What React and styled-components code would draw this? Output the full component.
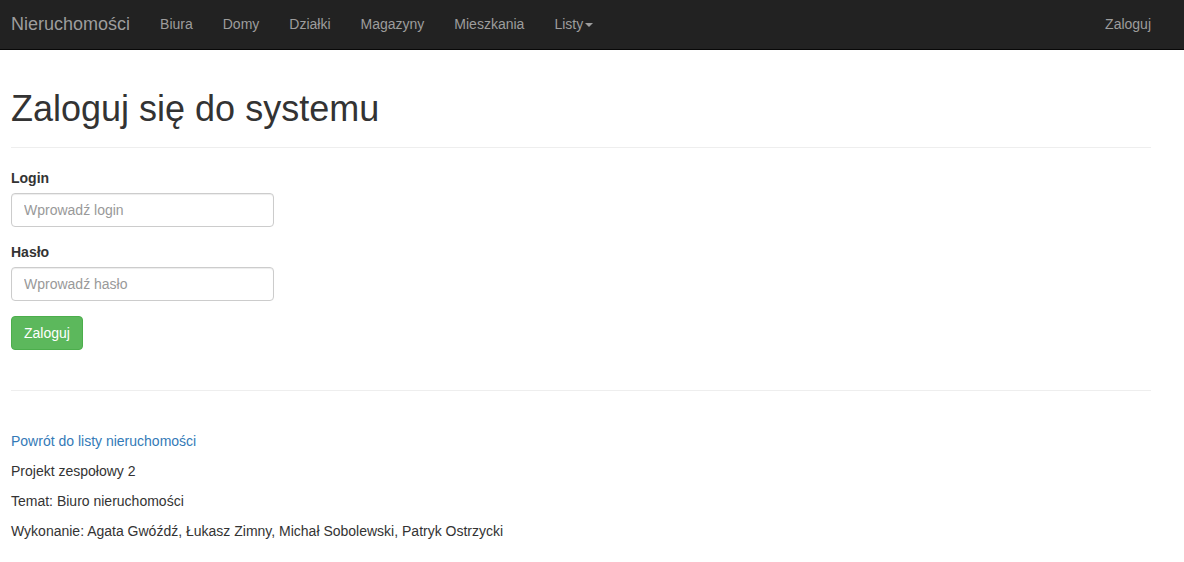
import React from "react";
import styled, { createGlobalStyle } from "styled-components";

const GlobalStyle = createGlobalStyle`
  *, *::before, *::after { box-sizing: border-box; }
  body {
    margin: 0;
    background: #fff;
    color: #333;
    font-family: "Liberation Sans", Arial, sans-serif;
    font-size: 14px;
    line-height: 20px;
  }
`;

const Navbar = styled.nav`
  display: flex;
  align-items: flex-start;
  min-height: 50px;
  padding: 0 18px 0 11px;
  background: #222;
  border-bottom: 1px solid #080808;
`;

const Brand = styled.a`
  padding: 14px 15px 15px 0;
  color: #9d9d9d;
  font-size: 18px;
  text-decoration: none;
`;

const NavList = styled.ul`
  display: flex;
  margin: 0;
  padding: 0;
  list-style: none;
  margin-left: ${(p) => (p.$end ? "auto" : "0")};
`;

const NavLink = styled.a`
  display: flex;
  align-items: center;
  gap: 2px;
  padding: 14px 15px 15px;
  color: #9d9d9d;
  text-decoration: none;
  &:hover { color: #fff; }
`;

const Caret = styled.span`
  margin-top: 2px;
  border-top: 4px solid;
  border-left: 4px solid transparent;
  border-right: 4px solid transparent;
`;

const Page = styled.main`
  padding: 41px 33px 10px 11px;
`;

const Title = styled.h1`
  margin: 0;
  font-size: 36px;
  font-weight: 400;
  line-height: 36px;
`;

const Rule = styled.hr`
  margin: 20px 0;
  border: 0;
  border-top: 1px solid #eee;
`;

const Form = styled.form`
  padding-bottom: 20px;
`;

const Field = styled.div`
  margin-bottom: 15px;
`;

const Label = styled.label`
  display: block;
  margin-bottom: 5px;
  font-weight: 700;
`;

const Input = styled.input`
  display: block;
  width: 263px;
  max-width: 100%;
  height: 34px;
  padding: 6px 12px;
  border: 1px solid #ccc;
  border-radius: 4px;
  background: #fff;
  color: #555;
  font: inherit;
  box-shadow: inset 0 1px 1px rgba(0, 0, 0, 0.075);
  &::placeholder { color: #999; opacity: 1; }
`;

const Submit = styled.button`
  display: block;
  padding: 6px 12px;
  border: 1px solid #4cae4c;
  border-radius: 4px;
  background: #5cb85c;
  color: #fff;
  font: inherit;
  cursor: pointer;
`;

const Footer = styled.footer`
  padding-top: 20px;
`;

const Text = styled.p`
  margin: 0 0 10px;
`;

const BackLink = styled.a`
  color: #337ab7;
  text-decoration: none;
`;

const sections = ["Biura", "Domy", "Działki", "Magazyny", "Mieszkania"];

export default function App() {
  return (
    <>
      <GlobalStyle />
      <Navbar>
        <Brand href="#">Nieruchomości</Brand>
        <NavList>
          {sections.map((name) => (
            <li key={name}><NavLink href="#">{name}</NavLink></li>
          ))}
          <li><NavLink href="#" aria-haspopup="true">Listy<Caret /></NavLink></li>
        </NavList>
        <NavList $end>
          <li><NavLink href="#">Zaloguj</NavLink></li>
        </NavList>
      </Navbar>
      <Page>
        <Title>Zaloguj się do systemu</Title>
        <Rule />
        <Form onSubmit={(e) => e.preventDefault()}>
          <Field>
            <Label htmlFor="login">Login</Label>
            <Input id="login" type="text" placeholder="Wprowadź login" />
          </Field>
          <Field>
            <Label htmlFor="password">Hasło</Label>
            <Input id="password" type="password" placeholder="Wprowadź hasło" />
          </Field>
          <Submit type="submit">Zaloguj</Submit>
        </Form>
        <Rule />
        <Footer>
          <Text><BackLink href="#">Powrót do listy nieruchomości</BackLink></Text>
          <Text>Projekt zespołowy 2</Text>
          <Text>Temat: Biuro nieruchomości</Text>
          <Text>Wykonanie: Agata Gwóźdź, Łukasz Zimny, Michał Sobolewski, Patryk Ostrzycki</Text>
        </Footer>
      </Page>
    </>
  );
}
